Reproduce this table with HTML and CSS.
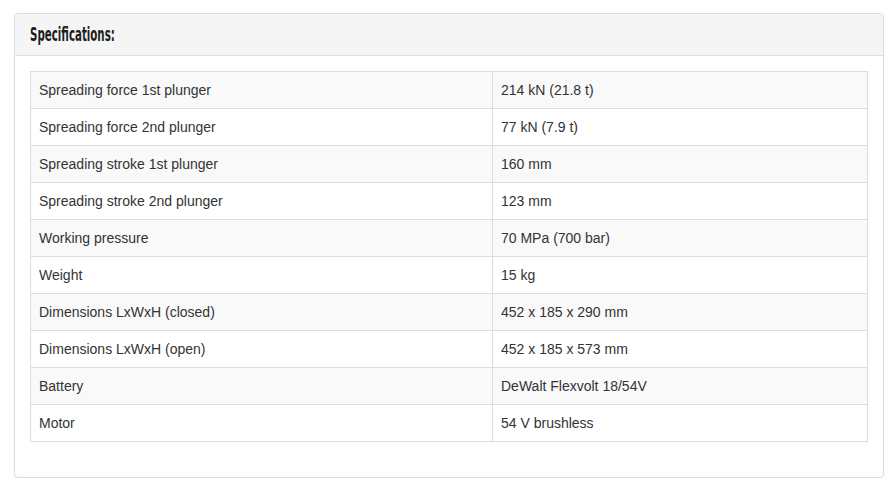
FILE: index.html
```html
<!DOCTYPE html>
<html>
<head>
<meta charset="utf-8">
<link rel="stylesheet" href="styles.css">
</head>
<body>
<div class="panel">
  <div class="panel-heading"><h3 class="panel-title"><span class="title-text">Specifications:</span></h3></div>
  <div class="panel-body">
    <table class="spec">
      <tbody>
        <tr><td>Spreading force 1st plunger</td><td>214 kN (21.8 t)</td></tr>
        <tr><td>Spreading force 2nd plunger</td><td>77 kN (7.9 t)</td></tr>
        <tr><td>Spreading stroke 1st plunger</td><td>160 mm</td></tr>
        <tr><td>Spreading stroke 2nd plunger</td><td>123 mm</td></tr>
        <tr><td>Working pressure</td><td>70 MPa (700 bar)</td></tr>
        <tr><td>Weight</td><td>15 kg</td></tr>
        <tr><td>Dimensions LxWxH (closed)</td><td>452 x 185 x 290 mm</td></tr>
        <tr><td>Dimensions LxWxH (open)</td><td>452 x 185 x 573 mm</td></tr>
        <tr><td>Battery</td><td>DeWalt Flexvolt 18/54V</td></tr>
        <tr><td>Motor</td><td>54 V brushless</td></tr>
      </tbody>
    </table>
  </div>
</div>
</body>
</html>
```
FILE: styles.css
```css
html, body {
  margin: 0;
  background: #fff;
}
body {
  padding: 13px 8px 0 14px;
  font-family: "Liberation Sans", Arial, sans-serif;
  font-size: 14px;
  line-height: 1.42857;
  color: #333;
}
.panel {
  border: 1px solid #ddd;
  border-radius: 4px;
  background: #fff;
  box-shadow: 0 1px 1px rgba(0,0,0,.05);
}
.panel-heading {
  background: #f5f5f5;
  border-bottom: 1px solid #ddd;
  border-radius: 3px 3px 0 0;
  padding: 10px 15px;
}
.panel-title {
  margin: 0;
  height: 21px;
  font-family: "DejaVu Sans", sans-serif;
  font-stretch: condensed;
  font-weight: bold;
  font-size: 20px;
  line-height: 21px;
  color: #1e1e1e;
  white-space: nowrap;
}
.title-text {
  display: inline-block;
  transform: scaleX(0.57);
  transform-origin: 0 50%;
}
.panel-body {
  padding: 15px;
}
.spec {
  width: 100%;
  border-collapse: collapse;
  border: 1px solid #ddd;
  margin-bottom: 20px;
}
.spec td {
  border: 1px solid #ddd;
  padding: 8px;
  line-height: 20px;
  vertical-align: top;
}
.spec td:first-child {
  width: 445px;
}
.spec tr:nth-child(odd) td {
  background: #f9f9f9;
}
```
